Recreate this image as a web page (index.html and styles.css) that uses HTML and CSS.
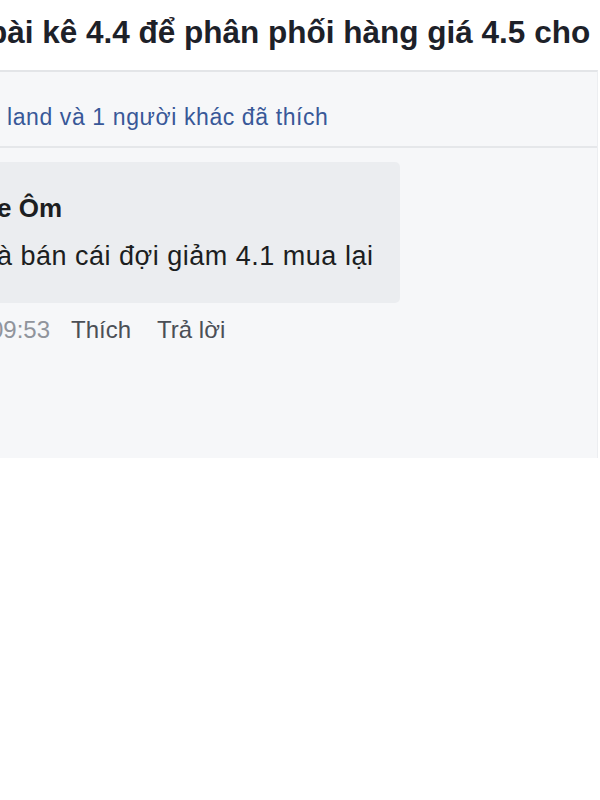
FILE: index.html
```html
<!DOCTYPE html>
<html lang="vi">
<head>
<meta charset="utf-8">
<link rel="stylesheet" href="styles.css">
</head>
<body>
<div class="page">
  <header class="post-head">
    <h1 class="post-title">bài kê 4.4 để phân phối hàng giá 4.5 cho</h1>
  </header>
  <section class="feedback">
    <div class="likes"><span class="likes-text">land và 1 người khác đã thích</span></div>
    <div class="comments">
      <div class="comment">
        <div class="bubble">
          <div class="author">e Ôm</div>
          <div class="body">à bán cái đợi giảm 4.1 mua lại</div>
        </div>
        <div class="actions">
          <span class="time">09:53</span>
          <span class="act">Thích</span>
          <span class="act">Trả lời</span>
        </div>
      </div>
    </div>
  </section>
</div>
</body>
</html>
```
FILE: styles.css
```css
html, body {
  margin: 0;
  padding: 0;
  background: #ffffff;
}
body {
  font-family: "Liberation Sans", Arial, sans-serif;
  width: 600px;
  overflow: hidden;
}
.page {
  width: 600px;
}
.post-head {
  height: 70px;
  box-sizing: border-box;
  padding-top: 12px;
  overflow: hidden;
}
.post-title {
  margin: 0 0 0 -12px;
  font-size: 31.5px;
  font-weight: bold;
  color: #1d2129;
  white-space: nowrap;
  line-height: 40px;
}
.feedback {
  width: 597px;
  height: 386px;
  background: #f6f7f9;
  border-top: 2px solid #e3e5e8;
  border-right: 1px solid #eceef1;
  overflow: hidden;
}
.likes {
  padding: 30px 0 14px 7px;
  border-bottom: 2px solid #e5e7ea;
}
.likes-text {
  display: block;
  font-size: 23px;
  line-height: 30px;
  letter-spacing: 0.6px;
  color: #385898;
  white-space: nowrap;
}
.comments {
  padding-top: 14px;
}
.bubble {
  width: 400px;
  height: 141px;
  background: #ebedf0;
  border-radius: 0 5px 5px 0;
  box-sizing: border-box;
  padding-top: 30px;
  overflow: hidden;
}
.author {
  font-size: 26px;
  font-weight: bold;
  color: #1c1e21;
  line-height: 32px;
  margin-left: -3px;
  white-space: nowrap;
}
.body {
  font-size: 27px;
  color: #1c1e21;
  line-height: 34px;
  letter-spacing: 0.5px;
  margin-top: 15px;
  margin-left: -3px;
  white-space: nowrap;
}
.actions {
  display: flex;
  gap: 26px;
  margin-top: 12px;
  margin-left: -10px;
  font-size: 24px;
  line-height: 30px;
  white-space: nowrap;
}
.time {
  color: #90949c;
  margin-right: -5px;
}
.act {
  color: #4b4f56;
}
```
